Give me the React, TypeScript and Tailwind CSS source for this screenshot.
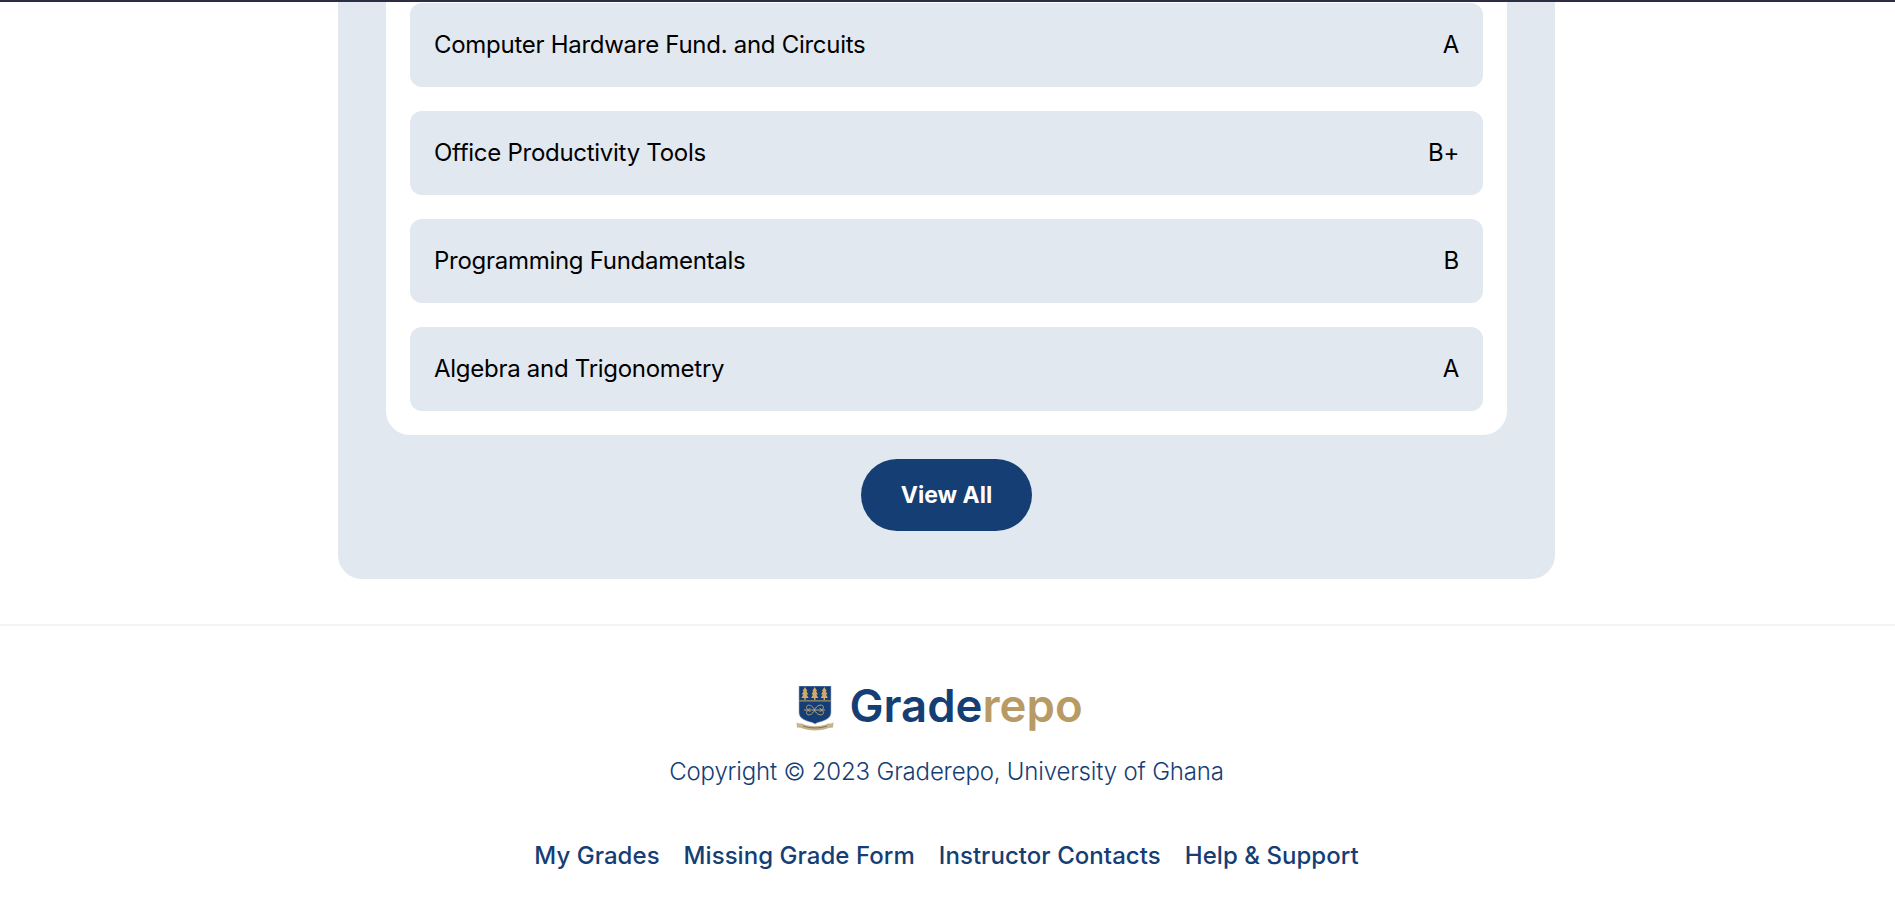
const font = "font-['Inter','Noto_Sans',sans-serif]";

const courses = [
  { name: "Computer Hardware Fund. and Circuits", grade: "A" },
  { name: "Office Productivity Tools", grade: "B+" },
  { name: "Programming Fundamentals", grade: "B" },
  { name: "Algebra and Trigonometry", grade: "A" },
];

const links = ["My Grades", "Missing Grade Form", "Instructor Contacts", "Help & Support"];

function Tree({ x }: { x: number }) {
  return (
    <path
      fill="#d0ab6a"
      d={`M${x} 1 L${x + 2.4} 5 L${x + 1.4} 5 L${x + 3.2} 8.5 L${x + 1.6} 8.5 L${x + 3.6} 12 L${x + 0.7} 12 L${x + 0.7} 14 L${x - 0.7} 14 L${x - 0.7} 12 L${x - 3.6} 12 L${x - 1.6} 8.5 L${x - 3.2} 8.5 L${x - 1.4} 5 L${x - 2.4} 5 Z`}
    />
  );
}

function Crest() {
  return (
    <svg width="38" height="45" viewBox="0 0 38 45" className="shrink-0">
      <path d="M3 0 H35 V26 C35 31 32 33 27 35 C24 36 21 36.5 19 38 C17 36.5 14 36 11 35 C6 33 3 31 3 26 Z" fill="#153e75" stroke="#9fb0c8" strokeWidth="0.6" />
      <Tree x={9} />
      <Tree x={18.7} />
      <Tree x={28.3} />
      <rect x="3.3" y="14.4" width="31.4" height="1" fill="#c8a566" />
      <g fill="none" stroke="#c8ad78" strokeWidth="0.9">
        <path d="M18.5 24 C16 18 10.5 18 10.5 21.5 C10.5 24 14 24 14 22" />
        <path d="M18.5 24 C21 18 27.5 18 27.5 21.5 C27.5 24 24 24 24 22" />
        <path d="M18.5 24 C16 30 10.5 30 10.5 26.5 C10.5 24 14 24 14 26" />
        <path d="M18.5 24 C21 30 27.5 30 27.5 26.5 C27.5 24 24 24 24 26" />
        <path d="M8 24 H29" />
      </g>
      <path d="M0.5 36 C2 38 4 37.5 6 37.5 C13 41 25 41 32 37.5 C34 37.5 36 38 37.5 36 L37 41.5 C35 42 33 41.5 31.5 42.5 C25 45 13 45 6.5 42.5 C5 41.5 3 42 1 41.5 Z" fill="#c9b48a" />
      <path d="M7 40 C14 42.6 24 42.6 31 40" fill="none" stroke="#6f6a58" strokeWidth="0.9" />
    </svg>
  );
}

export default function App() {
  return (
    <div className={`${font} min-h-[919px] bg-white`}>
      <div className="h-[2px] bg-[#2b2d42]" />
      <main className="flex justify-center pr-[2px]">
        <section className="w-[1217px] rounded-b-3xl bg-[#e2e8f0] px-12 pb-12">
          <div className="rounded-b-3xl bg-white px-6 pb-6 pt-px">
            <ul className="flex flex-col gap-6">
              {courses.map((course) => (
                <li
                  key={course.name}
                  className="flex h-[84px] items-center justify-between rounded-xl bg-[#e2e8f0] px-6 text-[24px] tracking-[-0.28px] text-black"
                >
                  <span>{course.name}</span>
                  <span>{course.grade}</span>
                </li>
              ))}
            </ul>
          </div>
          <div className="mt-6 flex justify-center">
            <button className="h-[72px] w-[171px] rounded-[36px] bg-[#153e75] text-[23px] font-bold text-white">
              View All
            </button>
          </div>
        </section>
      </main>
      <footer className="mt-[45px] border-t-2 border-[#f3f4f6] pr-[2px] pt-[60px]">
        <div className="flex items-start justify-center gap-[15px] pr-[14px]">
          <Crest />
          <span className="text-[45.5px] font-semibold leading-[39px] text-[#153e75]">
            Grade<span className="text-[#b89b64]">repo</span>
          </span>
        </div>
        <p className="mt-[23px] text-center text-[24px] font-light tracking-[-0.18px] text-[#153e75]">
          Copyright © 2023 Graderepo, University of Ghana
        </p>
        <nav className="mt-[48px] flex justify-center gap-6">
          {links.map((link) => (
            <a key={link} className="text-[24px] font-medium tracking-[0.05px] text-[#153e75]">
              {link}
            </a>
          ))}
        </nav>
      </footer>
    </div>
  );
}
